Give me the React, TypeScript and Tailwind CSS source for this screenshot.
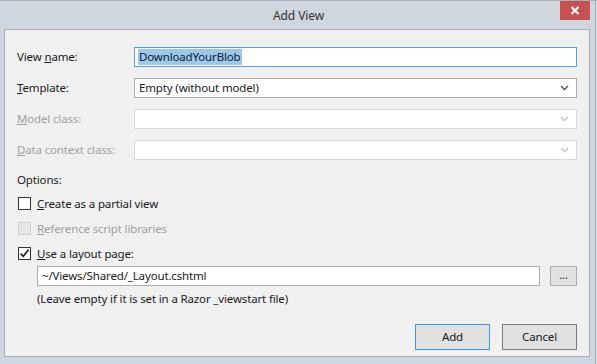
import React from "react";

const font = { fontFamily: '"Noto Sans", "Open Sans", sans-serif' };

function Chevron({ disabled }: { disabled?: boolean }) {
  return (
    <svg width="9" height="6" viewBox="0 0 9 6" className="shrink-0">
      <path
        d="M1 1 L4.5 4.5 L8 1"
        fill="none"
        stroke={disabled ? "#c4c4c4" : "#555"}
        strokeWidth="1.4"
      />
    </svg>
  );
}

function Select({ value, disabled }: { value?: string; disabled?: boolean }) {
  return (
    <div
      className={
        "h-[20px] flex items-center justify-between pl-[4px] pr-[7px] bg-white border " +
        (disabled ? "border-[#d9d9d9]" : "border-[#acacac]")
      }
    >
      <span className="text-[#1a1a1a] leading-none">{value}</span>
      <Chevron disabled={disabled} />
    </div>
  );
}

function Check({ checked, disabled }: { checked?: boolean; disabled?: boolean }) {
  return (
    <div
      className={
        "w-[13px] h-[13px] border flex items-center justify-center " +
        (disabled ? "border-[#cfcfcf] bg-[#e6e6e6]" : "border-[#333] bg-white")
      }
    >
      {checked ? (
        <svg width="11" height="11" viewBox="0 0 11 11">
          <path d="M1.5 5.5 L4.2 8.3 L9.6 1.8" fill="none" stroke="#1a1a1a" strokeWidth="1.6" />
        </svg>
      ) : null}
    </div>
  );
}

export default function App() {
  return (
    <div
      className="w-[597px] h-[364px] bg-[#cfd6dd] border-t border-[#a9b0b7] flex flex-col overflow-hidden"
      style={font}
    >
      {/* title bar */}
      <div className="relative h-[28px] flex items-center justify-center">
        <span className="text-[12px] tracking-[-0.1px] text-[#333] mt-[1px]">Add View</span>
        <div className="absolute left-[560px] top-0 w-[30px] h-[19px] bg-[#c75050] flex items-center justify-center">
          <svg width="10" height="9" viewBox="0 0 10 9">
            <path d="M1.5 1 L8.5 8 M8.5 1 L1.5 8" stroke="white" strokeWidth="2" />
          </svg>
        </div>
        <div className="absolute left-[595px] top-0 w-[1px] h-[364px] bg-[#a9b0b7]" />
      </div>

      {/* content panel */}
      <div className="ml-[4px] w-[586px] h-[328px] border border-[#a9afb5] bg-[#f0f0f0] px-[12px] pt-[17px] text-[11.5px] tracking-[-0.15px] text-[#1a1a1a]">
        <div className="grid grid-cols-[117px_1fr] gap-y-[11px] items-center">
          <span>
            View <u>n</u>ame:
          </span>
          <div className="h-[20px] flex items-center px-[3px] bg-white border border-[#569de5]">
            <span className="bg-[#99c9ef] px-[1px] leading-[16px]">DownloadYourBlob</span>
          </div>

          <span>
            <u>T</u>emplate:
          </span>
          <Select value="Empty (without model)" />

          <span className="text-[#a0a0a0]">
            <u>M</u>odel class:
          </span>
          <Select disabled />

          <span className="text-[#a0a0a0]">
            <u>D</u>ata context class:
          </span>
          <Select disabled />
        </div>

        <div className="mt-[12px] leading-[16px]">Options:</div>

        <div className="mt-[9px] flex flex-col gap-[12px]">
          <label className="flex items-center gap-[6px] h-[13px] ml-[1px]">
            <Check />
            <span>
              <u>C</u>reate as a partial view
            </span>
          </label>
          <label className="flex items-center gap-[6px] h-[13px] ml-[1px] text-[#a0a0a0]">
            <Check disabled />
            <span>
              <u>R</u>eference script libraries
            </span>
          </label>
          <label className="flex items-center gap-[6px] h-[13px] ml-[1px]">
            <Check checked />
            <span>
              <u>U</u>se a layout page:
            </span>
          </label>
        </div>

        <div className="mt-[6px] ml-[20px] flex items-center gap-[10px]">
          <div className="w-[503px] h-[20px] flex items-center px-[4px] bg-white border border-[#acacac]">
            ~/Views/Shared/_Layout.cshtml
          </div>
          <div className="w-[27px] h-[20px] flex items-center justify-center bg-[#e1e1e1] border border-[#adadad] text-[11px] leading-none pb-[3px]">
            ...
          </div>
        </div>

        <div className="mt-[5px] ml-[20px] leading-[16px]">
          (Leave empty if it is set in a Razor _viewstart file)
        </div>

        <div className="mt-[17px] flex justify-end gap-[12px]">
          <div className="w-[75px] h-[26px] flex items-center justify-center bg-[#e1e1e1] border border-[#3c97e6]">
            Add
          </div>
          <div className="w-[75px] h-[26px] flex items-center justify-center bg-[#e1e1e1] border border-[#7a7a7a]">
            Cancel
          </div>
        </div>
      </div>
    </div>
  );
}
